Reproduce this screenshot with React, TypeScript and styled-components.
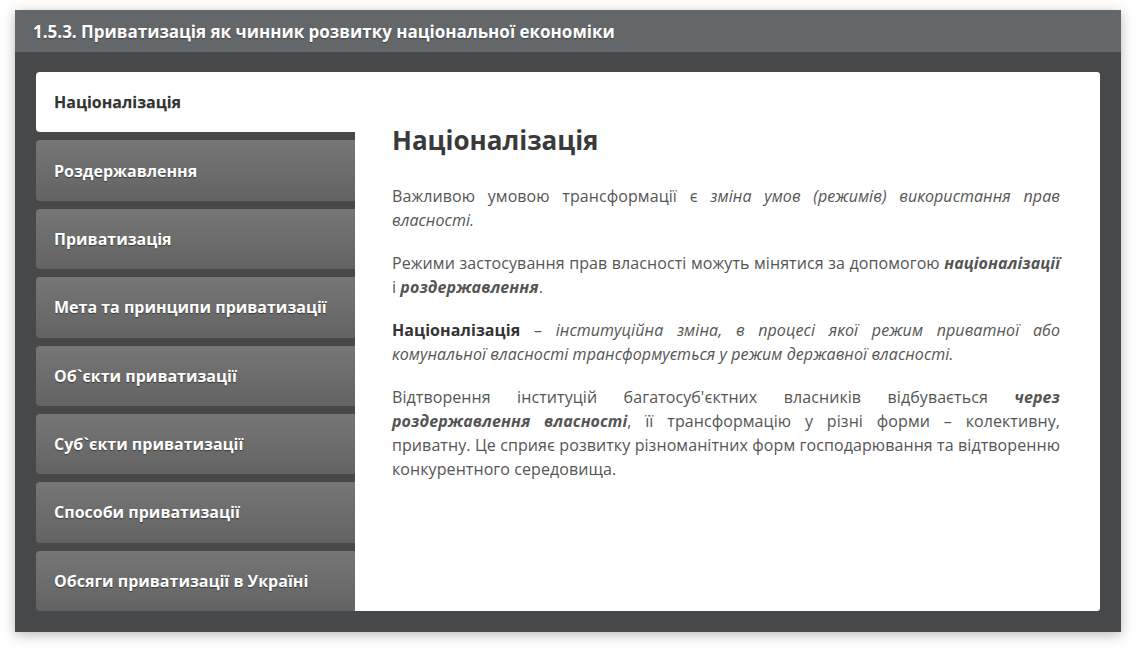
import React from "react";
import styled, { createGlobalStyle } from "styled-components";

const Global = createGlobalStyle`
  html, body { margin: 0; padding: 0; background: #ffffff; }
  body { font-family: "Open Sans", "Noto Sans", sans-serif; }
  #root { padding: 10px 15px 21px 15px; }
`;

const Frame = styled.div`
  width: 1106px;
  height: 622px;
  display: flex;
  flex-direction: column;
  background: #474849;
  box-shadow: 0 3px 12px rgba(0, 0, 0, 0.28);
`;

const Header = styled.div`
  height: 42px;
  flex: none;
  background: #646769;
  display: flex;
  align-items: center;
  padding-left: 18px;
  color: #ffffff;
  font-weight: 700;
  font-size: 17px;
  text-shadow: 0 1px 1px rgba(0, 0, 0, 0.35);
`;

const Body = styled.div`
  flex: 1;
  padding: 20px 21px 21px 21px;
  display: grid;
  grid-template-columns: 319px 1fr;
  min-height: 0;
`;

const Tabs = styled.div`
  display: flex;
  flex-direction: column;
  gap: 8px;
`;

const Tab = styled.div<{ $active?: boolean }>`
  flex: 1;
  display: flex;
  align-items: center;
  padding-left: 18px;
  border-radius: 4px 0 0 4px;
  font-weight: 700;
  font-size: 16px;
  cursor: pointer;
  color: ${(p) => (p.$active ? "#333333" : "#ffffff")};
  background: ${(p) =>
    p.$active ? "#ffffff" : "linear-gradient(#767676, #636363)"};
  text-shadow: ${(p) =>
    p.$active ? "0 1px 1px rgba(0,0,0,0.15)" : "0 1px 1px rgba(0,0,0,0.45)"};
`;

const Content = styled.div`
  background: #ffffff;
  border-radius: 0 3px 3px 0;
  padding: 50px 40px 0 37px;
`;

const Title = styled.h2`
  margin: 0 0 26px 0;
  font-size: 26px;
  line-height: 36px;
  font-weight: 700;
  color: #3a3a3a;
`;

const Para = styled.p`
  margin: 0 0 19px 0;
  font-size: 16px;
  line-height: 24px;
  letter-spacing: 0.08px;
  color: #555555;
  text-align: justify;
  & i { color: #555555; }
  & b { color: #333333; }
`;

const tabs = [
  "Націоналізація",
  "Роздержавлення",
  "Приватизація",
  "Мета та принципи приватизації",
  "Об`єкти приватизації",
  "Суб`єкти приватизації",
  "Способи приватизації",
  "Обсяги приватизації в Україні",
];

export default function App() {
  return (
    <>
      <Global />
      <Frame>
        <Header>1.5.3. Приватизація як чинник розвитку національної економіки</Header>
        <Body>
          <Tabs>
            {tabs.map((t, i) => (
              <Tab key={t} $active={i === 0}>
                {t}
              </Tab>
            ))}
          </Tabs>
          <Content>
            <Title>Націоналізація</Title>
            <Para>
              Важливою умовою трансформації є <i>зміна умов (режимів) використання прав власності.</i>
            </Para>
            <Para>
              Режими застосування прав власності можуть мінятися за допомогою{" "}
              <b><i>націоналізації</i></b> і <b><i>роздержавлення</i></b>.
            </Para>
            <Para>
              <b>Націоналізація</b> – <i>інституційна зміна, в процесі якої режим приватної або комунальної власності трансформується у режим державної власності.</i>
            </Para>
            <Para>
              Відтворення інституцій багатосуб'єктних власників відбувається{" "}
              <b><i>через роздержавлення власності</i></b>, її трансформацію у різні форми – колективну, приватну. Це сприяє розвитку різноманітних форм господарювання та відтворенню конкурентного середовища.
            </Para>
          </Content>
        </Body>
      </Frame>
    </>
  );
}
